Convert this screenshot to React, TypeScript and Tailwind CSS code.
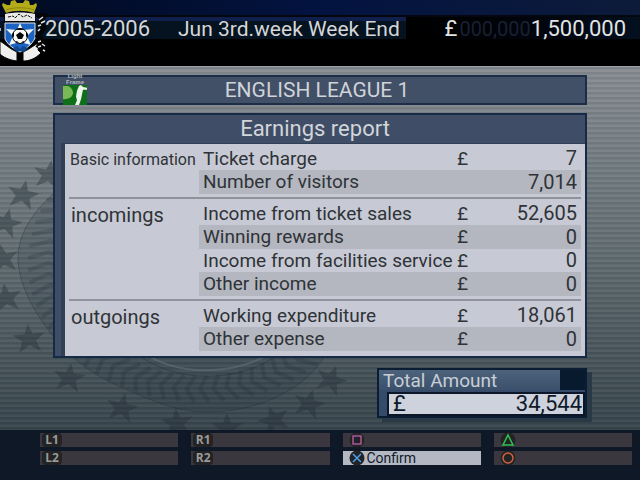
import type { ReactNode } from 'react';

type Row = { label: string; currency?: boolean; value: string };
type Section = { name: string; narrow?: boolean; rows: Row[] };

const sections: Section[] = [
  {
    name: 'Basic information',
    narrow: true,
    rows: [
      { label: 'Ticket charge', currency: true, value: '7' },
      { label: 'Number of visitors', value: '7,014' },
    ],
  },
  {
    name: 'incomings',
    rows: [
      { label: 'Income from ticket sales', currency: true, value: '52,605' },
      { label: 'Winning rewards', currency: true, value: '0' },
      { label: 'Income from facilities service', currency: true, value: '0' },
      { label: 'Other income', currency: true, value: '0' },
    ],
  },
  {
    name: 'outgoings',
    rows: [
      { label: 'Working expenditure', currency: true, value: '18,061' },
      { label: 'Other expense', currency: true, value: '0' },
    ],
  },
];

// x, y, rotation
const stars = [
  [49, 174, 10], [23, 194, 12], [6, 222, 15], [3, 258, -10], [6, 297, -8], [29, 338, -5],
  [69, 377, 8], [122, 407, 12], [177, 422, -5], [227, 427, 0], [274, 419, -20], [309, 403, 15], [331, 379, 20],
];

const chevron = (deg: number) => {
  const at = (d: number, rx: number, ry: number) => {
    const a = (d * Math.PI) / 180;
    return `${(200 + rx * Math.cos(a)).toFixed(1)},${(262 + ry * Math.sin(a)).toFixed(1)}`;
  };
  return `M${at(deg, 172, 139)}L${at(deg + 3, 152, 126)}L${at(deg, 132, 113)}`;
};

function Backdrop() {
  return (
    <svg className="absolute left-0 top-0 h-[363px] w-[640px]" viewBox="0 66 640 363" aria-hidden="true">
      <path
        d="M125 140C90 150 68 173 53 193C32 212 18 234 18 257C18 282 34 312 53 335C60 344 67 351 75 358C94 374 112 383 137 393C160 403 182 411 205 411C232 411 256 406 277 396C298 386 313 373 323 358V140Z"
        fill="#1f2b36"
        fillOpacity="0.14"
        stroke="#1f2b36"
        strokeOpacity="0.35"
      />
      <g fill="none" stroke="#1f2b36" strokeOpacity="0.22" strokeWidth="4">
        {Array.from({ length: 42 }, (_, i) => (
          <path key={i} d={chevron(22 + i * 5)} />
        ))}
      </g>
      <path d="M140 349C175 376 235 376 276 349" fill="none" stroke="#66757b" strokeOpacity="0.5" strokeWidth="2" />
      <path d="M132 349C172 384 243 384 284 349" fill="none" stroke="#1f2b36" strokeOpacity="0.4" />
      {stars.map(([x, y, r], i) => (
        <path
          key={i}
          transform={`translate(${x} ${y}) rotate(${r})`}
          d="M0 -15L4 -5L16 -5L7 2L11 13L0 6L-11 13L-7 2L-16 -5L-4 -5Z"
          fill="#222d38"
          fillOpacity="0.4"
        />
      ))}
    </svg>
  );
}

function Crest() {
  return (
    <svg className="absolute left-0 top-0 h-16 w-12" viewBox="0 0 48 64" role="img" aria-label="Club crest">
      <path d="M6 13L2 5L3 3L7 5L10 5L11 1L15 0L17 3L23 3L25 0L29 1L30 5L33 5L36 3L37 5L34 13C25 10 14 10 6 13Z" fill="#b3ab18" />
      <path d="M6 10C14 7 26 7 34 10" fill="none" stroke="#8b850f" strokeWidth="1" />
      <path d="M4 14C14 11 26 11 36 14L35 41C31 48 25 51 20 54C14 51 8 47 5 42Z" fill="#05070a" />
      <path d="M5 14C14 12 26 12 35 14V21H5Z" fill="#e9e9e6" />
      <path d="M8 17L13 16L15 18L19 14L23 17L27 15L32 18" fill="none" stroke="#111" strokeWidth="1" strokeDasharray="3 1" />
      <path d="M5 23H35V38C32 45 25 49 20 52C14 49 8 45 5 39Z" fill="#1c64c4" stroke="#dfe3e8" strokeWidth="1" />
      <path d="M20 23L23 30L34 29L27 36L31 45L20 42L9 45L13 36L6 29L17 30Z" fill="#f4f6f8" />
      <circle cx="20" cy="36" r="7.5" fill="#f8f8f8" stroke="#080808" strokeWidth="1" />
      <path d="M20 32L24 35L22 39H18L16 35ZM16 29L20 28L24 29L22 30H18ZM12 34L14 32L14 36L13 38ZM28 34L26 32L26 36L27 38ZM15 42L17 41L19 43ZM25 42L23 41L21 43Z" fill="#080808" />
      <path d="M0 41C5 44 10 49 17 52V61C9 60 3 57 0 54ZM23 52C30 49 34 45 40 42L38 50L41 53C35 59 29 61 23 61Z" fill="#efefed" stroke="#050505" strokeWidth="1" />
      <path d="M13 48L17 46L20 49L23 46L28 48L24 52L20 51L17 52Z" fill="#10498f" />
      <path d="M37 15L44 16L40 22L44 28L38 36L43 41L39 46L44 50" fill="none" stroke="#050505" strokeWidth="5" />
      <path d="M0 28V31M39 20L43 17M41 23L45 21M38 26L41 25M38 31L40 29M38 42L41 41M42 44L45 46M38 47L41 46M43 50L45 51" fill="none" stroke="#e8e8e8" strokeWidth="1.5" />
    </svg>
  );
}

function LeagueLogo() {
  return (
    <div className="absolute -top-1 left-2 w-6 text-center font-['Liberation_Sans'] text-[6px] font-bold leading-[6px] text-[#b4b8be]">
      <div>Light</div>
      <div>Frame</div>
      <svg className="h-5 w-6" viewBox="0 0 24 21" preserveAspectRatio="none" aria-hidden="true">
        <rect width="24" height="21" fill="#0d7019" />
        <path d="M0 1H5C9 3 10 6 10 9C9 13 6 15 0 15Z" fill="#78b956" />
        <path d="M16 1L18 0L20 2L24 3V5L20 5L19 10L18 15L16 21H12L14 16L13 12L14 6Z" fill="#edf5ed" />
      </svg>
    </div>
  );
}

function PadButton({ icon, children, active }: { icon: ReactNode; children?: ReactNode; active?: boolean }) {
  return (
    <button
      type="button"
      className={
        active
          ? 'flex h-3.5 items-center bg-[#b4b8c2] pl-1.5 text-[#111b2c]'
          : 'flex h-3.5 items-center bg-[#3a383e] pl-1.5 text-[#a3a3a3]'
      }
    >
      {icon}
      {children}
    </button>
  );
}

function Key({ name }: { name: string }) {
  return (
    <span className="-ml-1 w-5 rounded bg-[#232325] text-center font-['Open_Sans'] text-xs font-bold leading-3.5 text-[#9a9a9a]">
      {name}
    </span>
  );
}

function Shape({ label, color, d }: { label: string; color: string; d: string }) {
  return (
    <svg className="h-4 w-4" viewBox="0 0 16 16" role="img" aria-label={label}>
      <circle cx="8" cy="8" r="7.5" fill="#232325" />
      <path d={d} fill="none" stroke={color} strokeWidth="1.5" />
    </svg>
  );
}

export default function App() {
  return (
    <div className="flex min-h-screen flex-col bg-black font-[Roboto,sans-serif]">
      <header className="relative h-[66px] bg-black">
        <div className="h-[15px] bg-linear-to-r from-[#010a20] via-[#031340] to-[#0d1b3a]" />
        <div className="flex h-6 justify-between border-t-2 border-[#05070f] bg-linear-to-r from-[#020b14] via-black to-[#03101f] pr-[14px] text-[22px] leading-[24px] text-[#d5d6d8]">
          <h1 className="flex h-[22px] gap-7 border-t-4 border-[#101f4b] bg-[#04131f] pl-[45px] pr-1.5 leading-4">
            <span>2005-2006</span>
            <span className="text-[21px] leading-4">Jun 3rd.week Week End</span>
          </h1>
          <div className="flex text-[#e2e3e5]">
            <span className="mr-0.5">£</span>
            <span className="text-xl leading-6 text-[#182032]" aria-hidden="true">000,000</span>
            <span>1,500,000</span>
          </div>
        </div>
        <Crest />
      </header>

      <main className="relative flex-1 border-t border-[#a0a2a6] bg-linear-to-b from-[#868c91] via-[#626d72] to-[#36434a] px-[53px] pb-3 pt-2">
        <div className="absolute inset-0 bg-[repeating-linear-gradient(to_bottom,#1c2a3014_0px,#1c2a3014_2px,#ffffff0d_3px,#ffffff0d_5px)]" />
        <Backdrop />

        <div className="relative">
          <div className="relative border-2 border-[#1c2d47] bg-[#414f67]">
            <h2 className="h-[26px] pr-1.5 text-center text-[21px] leading-[26px] text-[#d0d3d8]">ENGLISH LEAGUE 1</h2>
            <LeagueLogo />
          </div>

          <section className="mt-2 border-2 border-[#162945] bg-[#3f4e66] pl-1.5">
            <h2 className="h-7 pr-4 text-center text-[22px] leading-7 text-[#d2d5da]">Earnings report</h2>
            <div className="border-l-4 border-t border-[#303f54] bg-[#c7cad4] pb-[5px] pl-1 pr-1 pt-[3px]">
              <table className="w-full table-fixed border-collapse text-[19px] text-[#2f3337]">
                <colgroup>
                  <col className="w-[130px]" />
                  <col className="w-[254px]" />
                  <col className="w-8" />
                  <col />
                </colgroup>
                {sections.map((section, s) => (
                  <tbody key={section.name}>
                    {s > 0 && (
                      <tr>
                        <td colSpan={4} className="p-0">
                          <div className="mb-[3px] mt-[3px] h-0.5 bg-[#8f929b]" />
                        </td>
                      </tr>
                    )}
                    {section.rows.map((row, i) => (
                      <tr key={row.label}>
                        {i === 0 && (
                          <th
                            scope="rowgroup"
                            rowSpan={section.rows.length}
                            className={
                              section.narrow
                                ? 'whitespace-nowrap p-0 pl-px text-left align-top text-base font-normal leading-[26px]'
                                : 'p-0 pl-0.5 text-left align-top text-xl font-normal leading-[26px]'
                            }
                          >
                            {section.name}
                          </th>
                        )}
                        <td className={i % 2 ? 'h-6 whitespace-nowrap bg-[#b4b7c0] p-0 pl-1 leading-6' : 'h-[23px] whitespace-nowrap p-0 pl-1 leading-[23px]'}>
                          {row.label}
                        </td>
                        <td className={i % 2 ? 'bg-[#b4b7c0] p-0 pl-1 leading-6' : 'p-0 pl-1 leading-[23px]'}>
                          {row.currency && '£'}
                        </td>
                        <td className={i % 2 ? 'bg-[#b4b7c0] p-0 pr-1 text-right text-xl leading-6' : 'p-0 pr-1 text-right text-xl leading-[23px]'}>
                          {row.value}
                        </td>
                      </tr>
                    ))}
                  </tbody>
                ))}
              </table>
            </div>
          </section>

          <section className="ml-auto mt-2.5 w-[210px] border-2 border-[#0b1d33] bg-[#354b69] shadow-[5px_4px_0_#2a3946]">
            <div className="flex h-[22px] border-b-2 border-[#354b69]">
              <h2 className="flex-1 bg-linear-to-b from-[#4d637c] to-[#3b506b] pl-1 text-[19px] leading-[22px] text-[#c9ced6]">Total Amount</h2>
              <div className="w-[25px] bg-[#071a2e]" />
            </div>
            <div className="ml-2 flex justify-between border-2 border-[#0b1628] bg-[#cdd2dc] pl-1 pr-px text-[22px] leading-5 text-[#10192a]">
              <span>£</span>
              <span>34,544</span>
            </div>
          </section>
        </div>
      </main>

      <footer className="relative h-[51px] bg-[#0f1827] pl-10 pr-2 pt-[3px]">
        <div className="grid grid-cols-4 gap-x-[13px] gap-y-1">
          <PadButton icon={<Key name="L1" />} />
          <PadButton icon={<Key name="R1" />} />
          <PadButton icon={<Shape label="Square" color="#a8589a" d="M4 4H12V12H4Z" />} />
          <PadButton icon={<Shape label="Triangle" color="#2fc353" d="M8 3L13 13H3Z" />} />
          <PadButton icon={<Key name="L2" />} />
          <PadButton icon={<Key name="R2" />} />
          <PadButton active icon={<Shape label="Cross" color="#4aa0ec" d="M4 4L12 12M12 4L4 12" />}>
            <span className="pl-0.5 text-sm leading-3.5">Confirm</span>
          </PadButton>
          <PadButton icon={<Shape label="Circle" color="#d1603f" d="M8 3A5 5 0 1 1 8 13A5 5 0 1 1 8 3Z" />} />
        </div>
      </footer>
    </div>
  );
}
